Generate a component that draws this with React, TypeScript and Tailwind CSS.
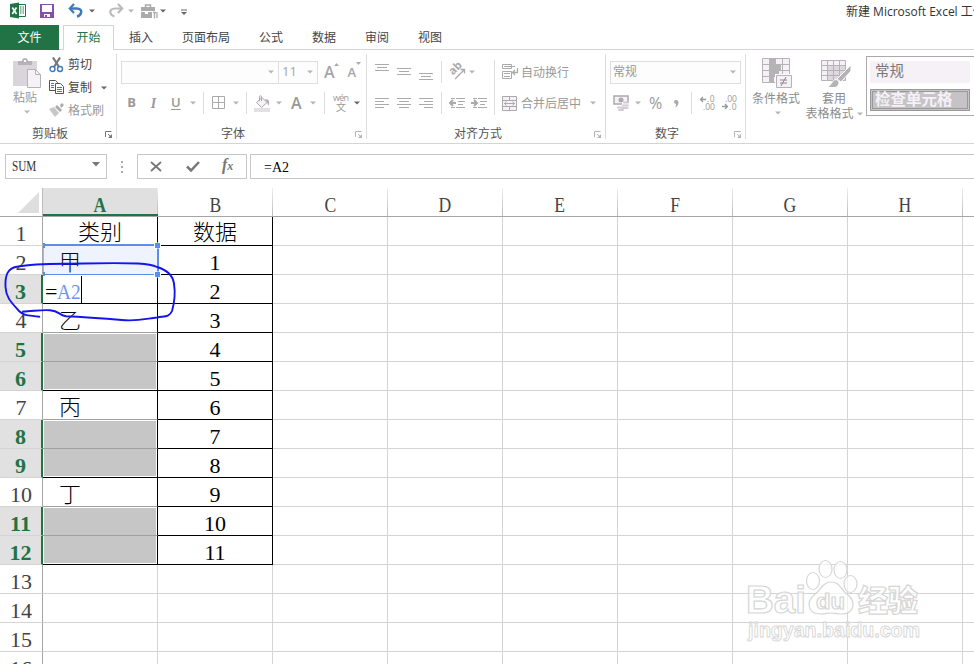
import type { ReactNode } from "react";

const columns = ["A", "B", "C", "D", "E", "F", "G", "H", "I"];

const categories: Record<number, string> = { 1: "类别", 2: "甲", 4: "乙", 7: "丙", 10: "丁" };
const selectedRows = [3, 5, 6, 8, 9, 11, 12];
const filledRows = [5, 6, 8, 9, 11, 12];
const rows = Array.from({ length: 16 }, (_, i) => i + 1);

function Caret({ className = "", dark = false }: { className?: string; dark?: boolean }) {
    return (
        <svg className={`shrink-0 ${className}`} width="6" height="4" viewBox="0 0 6 4">
            <path d="M0 0.5h6L3 3.5z" fill={dark ? "#666" : "#b5b5b5"} />
        </svg>
    );
}

function Divider({ className = "" }: { className?: string }) {
    return <div className={`w-px h-[22px] shrink-0 bg-[#dcdcdc] ${className}`} />;
}

function Launcher({ dark = false }: { dark?: boolean }) {
    return (
        <svg className="shrink-0 mt-[3px]" width="8" height="8" viewBox="0 0 8 8" fill="none" stroke={dark ? "#777" : "#b5b5b5"}>
            <path d="M0.5 6V0.5H6.5M3 3l3 3" />
            <path d="M7 3v4H3z" fill={dark ? "#777" : "#b5b5b5"} stroke="none" />
        </svg>
    );
}

function Group({ label, width, labelClass, dark, children }: { label: string; width: string; labelClass: string; dark?: boolean; children: ReactNode }) {
    return (
        <div className={`h-[85px] mt-1 shrink-0 border-r border-[#dcdcdc] flex flex-col ${width}`}>
            <div className="h-[69px] shrink-0">{children}</div>
            <div className="flex h-[16px] items-center pt-[5px] text-[#555] justify-between pr-[3px]">
                <span className={labelClass}>{label}</span>
                <Launcher dark={dark} />
            </div>
        </div>
    );
}

// horizontal strokes used by the alignment buttons
function Lines({ lines, className = "" }: { lines: number[][]; className?: string }) {
    return (
        <svg className={`shrink-0 ${className}`} width="15" height="22" viewBox="0 0 15 22" stroke="#aaa" shapeRendering="crispEdges">
            {lines.map(([x1, x2, y]) => (
                <path key={y} d={`M${x1} ${y + 0.5}H${x2}`} />
            ))}
        </svg>
    );
}

function QuickAccess() {
    return (
        <div className="flex h-[25px] items-start pt-[2px] relative">
            <svg className="ml-[9px]" width="17" height="17" viewBox="0 0 17 17">
                <path d="M9 2.5h7.5v12H9" fill="#fff" stroke="#217346" />
                <path d="M11 5h1.5M13.5 5H15M11 7h1.5M13.5 7H15M11 9h1.5M13.5 9H15M11 11h1.5M13.5 11H15" stroke="#217346" />
                <path d="M1 2l9-1.5v16L1 15z" fill="#217346" />
                <path d="M3.3 5.5l4.2 6.500M7.500 5.500L3.300 12" stroke="#fff" strokeWidth="1.600" />
            </svg>
            <svg className="ml-[14px] mt-[2px]" width="14" height="14" viewBox="0 0 14 14">
                <path d="M0 0h14v14H0z" fill="#8650a8" />
                <path d="M2 1h10v7H2zM4 10h6v3H4z" fill="#fff" />
                <path d="M5 11h2v2H5z" fill="#8650a8" />
            </svg>
            <svg className="ml-[14px] mt-[1px]" width="17" height="15" viewBox="0 0 17 15" fill="none" stroke="#3f7ab8" strokeWidth="2.500">
                <path d="M2 5.500h6.500c4 0 5.500 2 4.500 4.500c-.5 1.500-2 3-4 3.500" />
                <path d="M6 1L1.800 5.500L6 10" strokeWidth="2.200" />
            </svg>
            <Caret dark className="ml-[4px] mt-[7px]" />
            <svg className="ml-[13px] mt-[1px]" width="17" height="15" viewBox="0 0 17 15" fill="none" stroke="#bbb" strokeWidth="2.200">
                <path d="M14 5.500H7.500c-4 0-6 2-5 4.500c.5 1.500 2 3 4 3.500" />
                <path d="M10 1l4.200 4.500L10 10" />
            </svg>
            <Caret className="ml-[3px] mt-[7px]" />
            <svg className="ml-[7px] mt-[2px]" width="17" height="15" viewBox="0 0 17 15">
                <path d="M4.500 3V1h5v2" fill="none" stroke="#aaa" strokeWidth="1.500" />
                <path d="M0 3h14v4H0zM0 8h4v2h3V8h4v6H0z" fill="#aaa" />
                <path d="M12 8.500h3M13.500 9v5.500M16 8v6" stroke="#aaa" strokeWidth="1.300" />
            </svg>
            <Caret dark className="ml-[2px] mt-[7px]" />
            <svg className="ml-[15px] mt-[7px]" width="6" height="7" viewBox="0 0 6 7">
                <path d="M0 1h6" stroke="#666" />
                <path d="M0 3h6L3 6z" fill="#666" />
            </svg>
            <span className="absolute left-[846px] top-[3px] whitespace-nowrap text-[#333] leading-[17px]">新建 Microsoft Excel 工作表</span>
        </div>
    );
}

function Tabs() {
    return (
        <div className="flex h-[25px] border-b border-[#d4d4d4] leading-[25px] text-[#444]">
            <div className="w-[59px] h-[25px] bg-[#217346] text-white text-center">文件</div>
            <div className="ml-1 w-[51px] h-[25px] bg-white border border-b-0 border-[#d4d4d4] text-[#217346] text-center leading-[23px]">开始</div>
            <div className="flex gap-[29px] ml-[15px]">
                {["插入", "页面布局", "公式", "数据", "审阅", "视图"].map((t) => (
                    <span key={t}>{t}</span>
                ))}
            </div>
        </div>
    );
}

function Clipboard() {
    return (
        <Group label="剪贴板" width="w-[117px]" labelClass="ml-[32px]" dark>
            <div className="flex">
                <div className="flex flex-col items-center w-[28px] ml-[13px] pt-[4px] text-[#999]">
                    <svg width="28" height="30" viewBox="0 0 28 30">
                        <path d="M0 3h24v25H0z" fill="#d9d5da" />
                        <path d="M5 7V3h4c0-4 6-4 6 0h4v4z" fill="#b5b3b6" />
                        <path d="M11 2h2v2h-2z" fill="#fff" />
                        <path d="M14.500 11.500h8l5 5v13h-13z" fill="#f5f1f7" stroke="#b5b3b6" />
                        <path d="M22.500 11.500v5h5" fill="none" stroke="#b5b3b6" />
                    </svg>
                    <span className="mt-[1px] -ml-[4px] leading-[18px] whitespace-nowrap">粘贴</span>
                    <Caret className="mt-[3px]" />
                </div>
                <div className="ml-[8px] -mt-px text-[#444]">
                    <div className="flex h-[23px] items-center">
                        <svg width="15" height="16" viewBox="0 0 15 16" fill="none">
                            <path d="M4 0.500l6 9.500M11 0.500L5 10" stroke="#777" strokeWidth="2.200" />
                            <circle cx="3.500" cy="12" r="2.500" stroke="#3f7ab8" strokeWidth="1.400" />
                            <circle cx="11" cy="12" r="2.500" stroke="#3f7ab8" strokeWidth="1.400" />
                        </svg>
                        <span className="ml-[4px]">剪切</span>
                    </div>
                    <div className="flex h-[23px] items-center">
                        <svg width="15" height="15" viewBox="0 0 15 15" fill="#fff" stroke="#555">
                            <path d="M.5.500h6l2 2v8h-8z" />
                            <path d="M2 3.500h3M2 5.500h3M2 7.500h3" stroke="#3f7ab8" />
                            <path d="M6.500 3.500h5l3 3v7h-8z" />
                            <path d="M8 7.500h5M8 9.500h5M8 11.500h5" stroke="#3f7ab8" />
                        </svg>
                        <span className="ml-[4px]">复制</span>
                        <Caret dark className="ml-[9px]" />
                    </div>
                    <div className="flex h-[23px] items-center text-[#999]">
                        <svg width="15" height="15" viewBox="0 0 15 15">
                            <path d="M0 6l5-2 5 6-4 4z" fill="#c9c6ca" />
                            <path d="M6 4l2-2 5 5-2 2zM11 2l2-2 2 2-3 3z" fill="#aaa" />
                        </svg>
                        <span className="ml-[4px]">格式刷</span>
                    </div>
                </div>
            </div>
        </Group>
    );
}

function FontGroup() {
    return (
        <Group label="字体" width="w-[250px]" labelClass="ml-[104px]">
            <div className="flex h-[36px] items-center pl-1">
                <div className="flex w-[158px] h-[23px] border border-[#dedede] bg-[#fdfdfd] items-center justify-end pr-[4px]">
                    <Caret />
                </div>
                <div className="flex w-[40px] h-[23px] -ml-px border border-[#dedede] bg-[#fdfdfd] items-center justify-between pl-[3px] pr-[4px] text-[#a5a5a5] text-[13px]">
                    11
                    <Caret />
                </div>
                <div className="flex ml-[6px] text-[#a5a5a5] font-semibold text-[16px] leading-[22px]">
                    A
                    <svg className="mt-[2px] -ml-px" width="5" height="4" viewBox="0 0 5 4"><path d="M0 3h5L2.500 0z" fill="#aaa" /></svg>
                </div>
                <div className="flex ml-[9px] text-[#a5a5a5] font-semibold text-[13px] leading-[24px]">
                    A
                    <svg className="mt-[2px]" width="5" height="4" viewBox="0 0 5 4"><path d="M0 0h5L2.500 3z" fill="#aaa" /></svg>
                </div>
            </div>
            <div className="flex h-[26px] items-center text-[#999] text-[13px]">
                <b className="ml-[10px] w-[9px] text-center">B</b>
                <i className="ml-[13px] w-[9px] text-center font-['Liberation_Serif',serif] font-bold text-[14px]">I</i>
                <span className="ml-[13px] w-[9px] text-center font-semibold underline underline-offset-2">U</span>
                <Caret className="ml-[10px]" />
                <Divider className="ml-[7px]" />
                <svg className="ml-[8px]" width="14" height="14" viewBox="0 0 14 14" fill="none" stroke="#aaa">
                    <path d="M.5.500h12v12H.5zM6.500.500v12M.5 6.500h12" />
                </svg>
                <Caret className="ml-[7px]" />
                <Divider className="ml-[7px]" />
                <svg className="ml-[7px]" width="17" height="17" viewBox="0 0 17 17">
                    <path d="M0 13h16v4H0z" fill="#e3dfe4" />
                    <path d="M2.500 7.500l5.500-5 5 5-5.500 5zM5.500 6V1.500c0-1 2-1 2 0V6" fill="#f5f1f7" stroke="#aaa" />
                    <path d="M11 4c4 0 5 3 3.500 7L13 7z" fill="#aaa" />
                </svg>
                <Caret className="ml-[5px]" />
                <b className="ml-[9px] w-[11px] text-[16px] font-semibold">A</b>
                <Caret className="ml-[8px]" />
                <Divider className="ml-[8px]" />
                <svg className="ml-[7px] overflow-visible" width="18" height="18" viewBox="0 0 18 18" fill="#999">
                    <text x="1" y="7" fontSize="9" textLength="16">wén</text>
                    <text x="4" y="17" fontSize="10">文</text>
                </svg>
                <Caret dark className="ml-[4px]" />
            </div>
        </Group>
    );
}

function AlignGroup() {
    return (
        <Group label="对齐方式" width="w-[239px]" labelClass="ml-[87px]">
            <div className="flex pl-[8px]">
                <div>
                    <div className="flex h-[36px] items-center">
                        <Lines lines={[[0, 14, 3], [2, 12, 6], [0, 14, 9]]} />
                        <Lines lines={[[0, 14, 7], [2, 12, 10], [0, 14, 13]]} className="ml-[7px]" />
                        <Lines lines={[[0, 14, 12], [2, 12, 15], [0, 14, 18]]} className="ml-[7px]" />
                        <Divider className="ml-[7px]" />
                        <svg className="ml-[7px] overflow-visible" width="17" height="16" viewBox="0 0 17 16">
                            <text x="0" y="0" fontSize="11" fontWeight="700" fill="#aaa" transform="translate(4 11.500) rotate(-45)">ab</text>
                            <path d="M6 15L15 6M11.500 5.500H15.500V9.500" fill="none" stroke="#aaa" strokeWidth="1.300" />
                        </svg>
                        <Caret className="ml-[3px]" />
                    </div>
                    <div className="flex h-[26px] items-center">
                        <Lines lines={[[0, 14, 6], [0, 9, 9], [0, 14, 12], [0, 9, 15]]} />
                        <Lines lines={[[0, 14, 6], [2, 12, 9], [0, 14, 12], [2, 12, 15]]} className="ml-[7px]" />
                        <Lines lines={[[0, 14, 6], [5, 14, 9], [0, 14, 12], [5, 14, 15]]} className="ml-[7px]" />
                        <Divider className="ml-[7px]" />
                        <svg className="ml-[7px]" width="16" height="12" viewBox="0 0 16 12" fill="none" stroke="#aaa">
                            <path d="M2 1.500h4M7 1.500h9M9 4.500h7M9 7.500h5M2 10.500h4M7 10.500h9" />
                            <path d="M7 6H1M4 3L1 6l3 3" strokeWidth="2" />
                        </svg>
                        <svg className="ml-[6px]" width="16" height="12" viewBox="0 0 16 12" fill="none" stroke="#aaa">
                            <path d="M2 1.500h4M7 1.500h9M9 4.500h7M9 7.500h5M2 10.500h4M7 10.500h9" />
                            <path d="M0 6h6M3 3l3 3-3 3" strokeWidth="2" />
                        </svg>
                    </div>
                </div>
                <div className="w-px h-[55px] mt-[6px] ml-[7px] bg-[#dcdcdc]" />
                <div className="ml-[7px] text-[#999]">
                    <div className="flex h-[36px] items-center">
                        <svg width="17" height="16" viewBox="0 0 17 16" fill="none" stroke="#aaa">
                            <path d="M.5.500h9v4h-9zM.5 7.500h9v7h-9zM2 2.500h11M2 9.500h6M2 12.500h6" />
                            <path d="M15.500 4v4.500H10.500M13 6l-2.500 2.500L13 11" strokeWidth="1.300" />
                        </svg>
                        <span className="ml-[2px] mt-px">自动换行</span>
                    </div>
                    <div className="flex h-[26px] items-center">
                        <svg width="15" height="15" viewBox="0 0 15 15" fill="#f5f1f7" stroke="#aaa">
                            <path d="M.5.500h14v14H.5zM.5 4.500h14M.5 10.500h14M7.500.500v4M7.500 10.500v4" />
                            <path d="M2.500 7.500h10M4.500 5.500l-2 2 2 2M10.500 5.500l2 2-2 2" fill="none" />
                        </svg>
                        <span className="ml-[4px] mt-px">合并后居中</span>
                        <Caret className="ml-[9px]" />
                    </div>
                </div>
            </div>
        </Group>
    );
}

function NumberGroup() {
    return (
        <Group label="数字" width="w-[140px]" labelClass="ml-[49px]">
            <div className="flex h-[36px] items-center pl-1">
                <div className="flex w-[131px] h-[23px] border border-[#dedede] bg-[#fdfdfd] items-center justify-between pl-[2px] pr-[4px] text-[#999]">
                    常规
                    <Caret />
                </div>
            </div>
            <div className="flex h-[26px] items-center text-[#999]">
                <svg className="ml-[7px]" width="17" height="16" viewBox="0 0 17 16">
                    <path d="M1 1h14v8H1z" fill="#f5f1f7" stroke="#aaa" strokeWidth="1.500" />
                    <circle cx="8" cy="5" r="2.500" fill="#aaa" />
                    <path d="M9 7h7v7H9z" fill="#fff" />
                    <path d="M11 7.500h4M10 10.500h5M9.500 13h5M5 12.500h4M6 15h4" stroke="#cfcbd0" strokeWidth="2" strokeLinecap="round" />
                </svg>
                <Caret className="ml-[5px]" />
                <span className="ml-[8px] w-[14px] text-[16px] leading-[20px]">%</span>
                <svg className="ml-[10px]" width="6" height="9" viewBox="0 0 6 9">
                    <path d="M1 2.500C1 .5 5.500 0 5.500 3.500c0 3-2.500 4.500-3.500 5 1-1.500 1-2.500 1-3.500-1 0-2-1-2-2.500z" fill="#aaa" />
                </svg>
                <Divider className="ml-[12px]" />
                <svg className="ml-[8px] overflow-visible" width="15" height="14" viewBox="0 0 15 14" fill="#999">
                    <path d="M.5 3.500H6M3 1L.5 3.500 3 6" fill="none" stroke="#999" strokeWidth="1.300" />
                    <text x="7" y="6" fontSize="8.500" textLength="7.500">.0</text>
                    <text x="3" y="14" fontSize="8.500" textLength="12" lengthAdjust="spacingAndGlyphs">.00</text>
                </svg>
                <svg className="ml-[7px] overflow-visible" width="15" height="14" viewBox="0 0 15 14" fill="#999">
                    <path d="M0 10.500H5.500M3 8l2.500 2.500L3 13" fill="none" stroke="#999" strokeWidth="1.300" />
                    <text x="3" y="6" fontSize="8.500" textLength="12" lengthAdjust="spacingAndGlyphs">.00</text>
                    <text x="7" y="14" fontSize="8.500" textLength="7.500">.0</text>
                </svg>
            </div>
        </Group>
    );
}

function StylesGroup() {
    return (
        <div className="flex text-[#8c8c8c] leading-[15px]">
            <div className="w-[48px] ml-[6px] pt-[8px] flex flex-col items-center">
                <svg className="ml-[2px]" width="30" height="30" viewBox="0 0 30 30">
                    <path d="M.5.500h27v24H.5z" fill="#f5f1f7" />
                    <path d="M8 0h6v6H8zM8 6h11v6H8zM8 12h9v7H8zM8 19h4v5H8z" fill="#b5b3b6" />
                    <path d="M.5.500h27v24H.5zM.5 6.500h27M.5 12.500h27M.5 18.500h27M7.500.500v24M20.500.500v24" fill="none" stroke="#b5b3b6" />
                    <path d="M13 16h17v14H13z" fill="#fff" />
                    <path d="M14.500 17.500h15v12h-15z" fill="#f5f1f7" stroke="#b5b3b6" />
                    <path d="M18 22h7M18 25h7M24 19l-5 9" stroke="#888" />
                </svg>
                <span className="mt-[3px] whitespace-nowrap">条件格式</span>
                <Caret className="mt-[5px] ml-[4px]" />
            </div>
            <div className="ml-[5px] w-[58px] pt-[8px] flex flex-col items-center">
                <svg className="ml-[3px]" width="30" height="30" viewBox="0 0 30 30">
                    <path d="M.5 2.500h24v20H.5z" fill="#f5f1f7" />
                    <path d="M6 7h18v15H6z" fill="#dcd8dd" />
                    <path d="M.5 2.500h24v20H.5zM.5 7.500h24M.5 12.500h24M.5 17.500h24M6.500 2.500v20M12.500 2.500v20M18.500 2.500v20" fill="none" stroke="#b5b3b6" />
                    <path d="M30 7v6L20 24l-4-3z" fill="#b5b3b6" stroke="#fff" />
                    <path d="M6 29.500c4-1 5-8 9-8 5 2 3 7-1 8z" fill="#b5b3b6" stroke="#fff" />
                </svg>
                <span className="mt-[3px]">套用</span>
                <span className="flex items-center whitespace-nowrap">
                    <span>表格格式</span>
                    <Caret className="ml-[3px]" />
                </span>
            </div>
            <div className="ml-[3px] mt-[6px] w-[120px] h-[60px] shrink-0 border border-[#aaa] pl-[3px] pt-[4px] text-[14.5px] text-[#777]">
                <div className="w-[100px] h-[22px] bg-[#f5f1f7] pl-[5px] leading-[19px]">常规</div>
                <div className="w-[100px] h-[22px] mt-[6px] border-[3px] border-double border-[#999] bg-[#c6c3c7] pl-[2px] text-[15.5px] leading-[14px] font-bold text-[#f5f1f7]">检查单元格</div>
            </div>
        </div>
    );
}

function FormulaBar() {
    return (
        <div className="flex h-[44px] pt-[10px] font-['Liberation_Serif','Noto_Sans_CJK_SC',serif] text-[14px] text-[#333]">
            <div className="ml-[5px] w-[102px] h-[25px] border border-[#c6c6c6] flex items-center justify-between pl-[6px] pr-[6px]">
                <span className="origin-left scale-x-[0.8]">SUM</span>
                <svg width="8" height="5" viewBox="0 0 8 5" className="-mt-[4px]"><path d="M0 0h8L4 4.500z" fill="#777" /></svg>
            </div>
            <div className="ml-[14px] mt-[7px] flex flex-col gap-[3px]">
                <i className="block size-[2px] bg-[#aaa]" />
                <i className="block size-[2px] bg-[#aaa]" />
                <i className="block size-[2px] bg-[#aaa]" />
            </div>
            <div className="ml-[14px] w-[110px] h-[25px] border border-[#c6c6c6] flex items-center pl-[12px]">
                <svg width="12" height="11" viewBox="0 0 12 11" stroke="#777" strokeWidth="1.800"><path d="M1 1l10 9M11 1L1 10" /></svg>
                <svg className="ml-[24px]" width="14" height="11" viewBox="0 0 14 11" fill="none" stroke="#777" strokeWidth="2.500"><path d="M1 5.500l4 4L13 1" /></svg>
                <span className="ml-[22px] -mt-[3px] italic font-bold text-[16px] text-[#777]">f<span className="text-[12px]">x</span></span>
            </div>
            <div className="ml-[3px] w-[724px] h-[25px] shrink-0 border border-r-0 border-[#c6c6c6] pl-[13px] leading-[25px] text-black">=A2</div>
        </div>
    );
}

function ColumnHeaders() {
    return (
        <div className="flex h-[29px] border-b border-[#a6a6a6]">
            <div className="w-[43px] shrink-0 flex pl-[18px] pt-[4px] border-r border-[#bbb]">
                <svg width="21" height="21" viewBox="0 0 21 21"><path d="M21 0v21H0z" fill="#dedede" /></svg>
            </div>
            {columns.map((c) => (
                <div key={c} className={`flex w-[115px] shrink-0 ${c === "A" ? "bg-[#e0e0e0] border-b-2 border-[#217346]" : ""}`}>
                    <div className={`flex-1 text-center leading-[33px] ${c === "A" ? "text-[#217346] font-bold" : "text-[#444]"}`}>
                        <span className="inline-block scale-x-[0.8]">{c}</span>
                    </div>
                    <div className="w-px bg-linear-to-b from-[#eee] to-[#bbb]" />
                </div>
            ))}
        </div>
    );
}

function CategoryCell({ row }: { row: number }) {
    let border = "border-[#d4d4d4]";
    if ([3, 6, 9, 12].includes(row)) border = "border-r-black border-b-black";
    else if (row < 12) border = "border-r-black border-b-[#a0a0a0]";
    const filled = filledRows.includes(row);
    const first = [5, 8, 11].includes(row);
    return (
        <div className={`w-[115px] shrink-0 border-r border-b ${border} ${filled ? "pl-px pr-px" : ""} ${filled && first ? "pt-px" : ""} ${filled && !first ? "pb-px" : ""}`}>
            {filled && <div className="h-full bg-[#c6c6c6]" />}
            {row === 1 && <div className="text-center leading-[32px] font-light">{categories[1]}</div>}
            {row > 1 && categories[row] && <div className="pl-[16px] leading-[33px] font-light">{categories[row]}</div>}
            {row === 3 && (
                <div className="flex pl-[2px] leading-[33px]">
                    <span className="w-[12px]">=</span>
                    <span className="w-[24px] text-[#6c96ea] origin-left scale-x-[0.88]">A2</span>
                    <span className="w-px h-[27px] mt-px bg-black" />
                </div>
            )}
        </div>
    );
}

function Sheet() {
    return (
        <div className="font-['Liberation_Serif','Noto_Sans_CJK_SC',serif] text-[22px]">
            <ColumnHeaders />
            {rows.map((row) => {
                const selected = selectedRows.includes(row);
                return (
                    <div key={row} className="flex h-[29px]">
                        <div
                            className={`w-[43px] shrink-0 text-center leading-[34px] border-b border-[#d4d4d4] ${
                                selected ? "bg-[#e1e1e1] text-[#217346] font-bold border-r-2 border-r-[#217346]" : "text-[#444] border-r border-r-[#a6a6a6]"
                            }`}
                        >
                            {row}
                        </div>
                        <CategoryCell row={row} />
                        <div className={`w-[115px] shrink-0 border-r border-b text-center ${row === 1 ? "leading-[32px] font-light" : "leading-[34px]"} ${row <= 12 ? "border-black" : "border-[#d4d4d4]"}`}>
                            {row === 1 ? "数据" : row <= 12 ? row - 1 : ""}
                        </div>
                        {columns.slice(2).map((c) => (
                            <div key={c} className="w-[115px] shrink-0 border-r border-b border-[#d4d4d4]" />
                        ))}
                    </div>
                );
            })}
        </div>
    );
}

// Reference range marker and the hand-drawn loop, both float above the cells
function Annotations() {
    return (
        <svg className="absolute left-0 top-[240px]" width="200" height="90" viewBox="0 240 200 90" fill="none">
            <path d="M43 246h114v28H43z" fill="#5b8def" fillOpacity="0.1" />
            <path d="M43 245h115M158 245v29" stroke="#5b8def" strokeWidth="2" />
            <path d="M43 274.500h115" stroke="#5b8def" />
            <path d="M43.500 245v29" stroke="#9ab8f2" />
            <path d="M154 242.500h7v6h-7zM154 271.500h7v6h-7z" fill="#fff" />
            <path d="M155 243h5v5h-5zM155 272h5v5h-5zM43 243h2v5h-2zM43 272h2v4h-2z" fill="#5b8def" />
            <path
                d="M39.300 316.700C31 315 25 317 19 311C12 303 6 298 5.500 287C5 276 7 268 18 266.500C35 263 60 264 83 263.500C105 263 125 263 138 263.500C148 264 152 264.500 157 267C167 270 173 275 174 284C176 296 174 304 172 311C169 318 164 316 157 317.500C145 319 138 321 125 320.200C104 318.500 84 317 66 316.200C58 315 60 311 50 310.200C40 309.500 32 311.500 23 311.500"
                stroke="#1414f0"
                strokeWidth="1.900"
                strokeLinecap="round"
            />
        </svg>
    );
}

function Watermark() {
    return (
        <svg className="absolute left-[740px] top-[555px] font-['Liberation_Sans','Noto_Sans_CJK_SC',sans-serif]" width="190" height="92" viewBox="740 555 190 92" fill="#fff" fillOpacity="0.7" stroke="#d6d6d6" strokeWidth="1.200">
            <text x="746" y="613" fontSize="38" fontWeight="700" textLength="60" lengthAdjust="spacingAndGlyphs">Bai</text>
            <ellipse cx="813" cy="581" rx="6.500" ry="8.500" />
            <ellipse cx="825.500" cy="569" rx="6.500" ry="8.500" />
            <ellipse cx="840.500" cy="570" rx="6.500" ry="8.500" />
            <ellipse cx="850.500" cy="584" rx="6.500" ry="8.500" />
            <path d="M831 582C840 582 841 590 848 595C857 603 853 614 842 614C837 614 834 613 831 613C828 613 825 614 820 614C808 614 806 602 814 595C821 590 823 582 831 582Z" />
            <text x="816" y="609" fontSize="22" fontWeight="700" textLength="29" lengthAdjust="spacingAndGlyphs">du</text>
            <text x="858" y="611" fontSize="30" fontWeight="900" textLength="60" lengthAdjust="spacingAndGlyphs">经验</text>
            <text x="748" y="637" fontSize="20" fontWeight="700" strokeWidth="0.900" textLength="172" lengthAdjust="spacingAndGlyphs">jingyan.baidu.com</text>
        </svg>
    );
}

export default function App() {
    return (
        <div className="relative w-[974px] h-[664px] overflow-hidden bg-white font-['Open_Sans','Noto_Sans_CJK_SC',sans-serif] text-[12px]">
            <QuickAccess />
            <Tabs />
            <div className="flex h-[94px] border-b border-[#d4d4d4]">
                <Clipboard />
                <FontGroup />
                <AlignGroup />
                <NumberGroup />
                <StylesGroup />
            </div>
            <FormulaBar />
            <Sheet />
            <Annotations />
            <Watermark />
        </div>
    );
}
